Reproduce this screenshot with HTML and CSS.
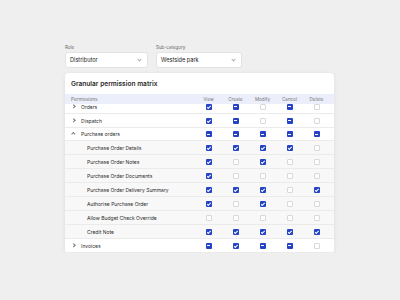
FILE: index.html
```html
<!DOCTYPE html>
<html lang="en">
<head>
  <meta charset="UTF-8" />
  <title>Permissions</title>
  <link rel="stylesheet" href="styles.css">
</head>
<body>
  <div class="page">
    <div class="filters">
      <div class="field role">
        <label>Role</label>
        <div class="select"><span>Distributor</span><i class="caret"></i></div>
      </div>
      <div class="field sub">
        <label>Sub-category</label>
        <div class="select"><span>Westside park</span><i class="caret"></i></div>
      </div>
    </div>

    <div class="card">
      <h2>Granular permission matrix</h2>
      <div class="matrix">
        <div class="row head">
          <span class="name">Permissions</span>
          <span>View</span><span>Create</span><span>Modify</span><span>Cancel</span><span>Delete</span>
        </div>
        <div class="rows" id="rows"></div>
      </div>
    </div>
  </div>

  <script>
    // c = checked, m = partial, o = empty
    const data = [
      { name: "Orders", top: true, open: false, v: "cmomo" },
      { name: "Dispatch", top: true, open: false, v: "cmomo" },
      { name: "Purchase orders", top: true, open: true, v: "mmmmm" },
      { name: "Purchase Order Details", v: "ccccо" },
      { name: "Purchase Order Notes", v: "cocoo" },
      { name: "Purchase Order Documents", v: "coooo" },
      { name: "Purchase Order Delivery Summary", v: "cccoc" },
      { name: "Authorise Purchase Order", v: "cocoo" },
      { name: "Allow Budget Check Override", v: "ooooo" },
      { name: "Credit Note", v: "ccccc" },
      { name: "Invoices", top: true, open: false, v: "mcmmo" }
    ];

    const rows = document.getElementById("rows");
    data.forEach(item => {
      const row = document.createElement("div");
      row.className = "row " + (item.top ? "top" : "child");
      let html = `<span class="name">`;
      if (item.top) html += `<i class="chev ${item.open ? "up" : ""}"></i>`;
      html += `${item.name}</span>`;
      for (const ch of item.v) {
        const kind = ch === "c" ? "checked" : ch === "m" ? "partial" : "empty";
        html += `<span><b class="box ${kind}"></b></span>`;
      }
      row.innerHTML = html;
      rows.appendChild(row);
    });
  </script>
</body>
</html>
```

FILE: styles.css
```css
body {
  margin: 0;
  background-color: #efefef;
  font-family: Inter, "Noto Sans", sans-serif;
  color: #2a2a2a;
}
.page {
  padding: 44px 66px 0 65px;
}
.filters {
  display: flex;
  gap: 8px;
}
.field label {
  display: block;
  font-size: 4.5px;
  color: #666;
  height: 8px;
  line-height: 8px;
}
.role .select {
  width: 83px;
}
.sub .select {
  width: 86px;
}
.select {
  box-sizing: border-box;
  height: 16px;
  background: #fff;
  border: 0.6px solid #e3e3e3;
  border-radius: 3px;
  display: flex;
  align-items: center;
  justify-content: space-between;
  padding: 0 6px 0 4px;
  font-size: 5.6px;
  color: #222;
}
.caret {
  width: 2px;
  height: 2px;
  border-right: 0.5px solid #aaa;
  border-bottom: 0.5px solid #aaa;
  transform: rotate(45deg);
  margin-top: -1.5px;
}
.card {
  margin-top: 5px;
  width: 269px;
  background: #fff;
  border-radius: 4px;
  box-shadow: 0 1px 4px rgba(0, 0, 0, 0.08);
  overflow: hidden;
}
.card h2 {
  margin: 0;
  font-size: 6.6px;
  font-weight: 600;
  height: 21px;
  line-height: 22px;
  padding-left: 6px;
}
.matrix {
  height: 159px;
  overflow: hidden;
}
.row {
  display: grid;
  grid-template-columns: 130px repeat(5, 27px);
  align-items: center;
  height: 14px;
  box-sizing: border-box;
  border-bottom: 0.6px solid #ebebeb;
  font-size: 5px;
}
.row > span {
  text-align: center;
}
.row .name {
  text-align: left;
  display: flex;
  align-items: center;
}
.head {
  position: relative;
  z-index: 1;
  height: 10px;
  background: #eceefb;
  color: #777;
  font-size: 4.6px;
  border-bottom: none;
}
.head .name {
  padding-left: 6px;
}
.rows {
  margin-top: -4px;
}
.top {
  background: #fff;
}
.top .name {
  padding-left: 7px;
}
.child {
  background: #f8f8f8;
}
.child .name {
  padding-left: 22px;
}
.rows .row:nth-child(3) {
  height: 13px;
}
.chev {
  width: 1.6px;
  height: 1.6px;
  border-right: 0.5px solid #777;
  border-bottom: 0.5px solid #777;
  transform: rotate(-45deg);
  margin-right: 6.5px;
}
.chev.up {
  transform: rotate(-135deg);
  margin-top: 1.5px;
}
.box {
  display: inline-block;
  vertical-align: middle;
  box-sizing: border-box;
  width: 6px;
  height: 6px;
  border-radius: 1px;
  position: relative;
}
.empty {
  background: #fff;
  border: 0.6px solid #d9d9d9;
}
.checked, .partial {
  background: #2443c6;
}
.checked::after {
  content: "";
  position: absolute;
  left: 2px;
  top: 0.8px;
  width: 1.4px;
  height: 2.8px;
  border-right: 0.8px solid #fff;
  border-bottom: 0.8px solid #fff;
  transform: rotate(45deg);
}
.partial::after {
  content: "";
  position: absolute;
  left: 1.3px;
  right: 1.3px;
  top: 2.6px;
  height: 0.9px;
  background: #fff;
}
```
